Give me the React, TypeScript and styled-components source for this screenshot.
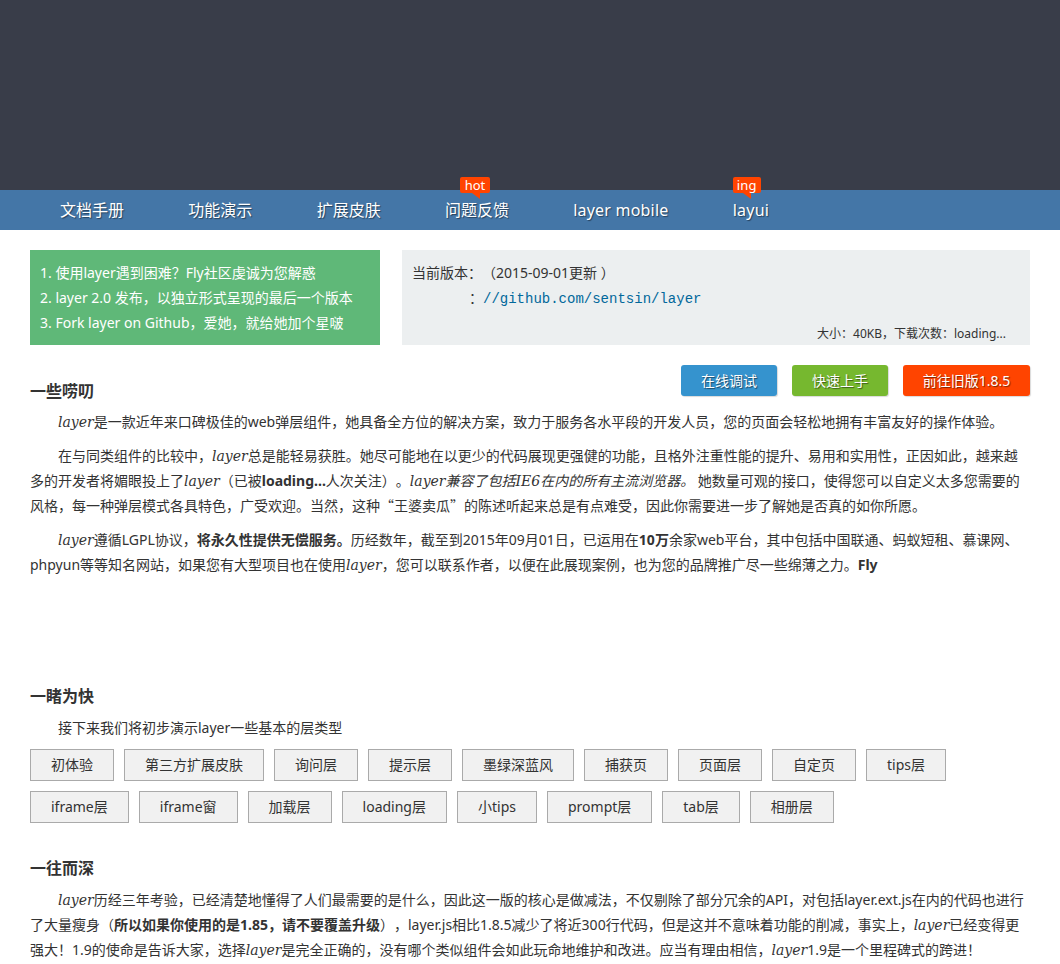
import React from "react";
import styled, { createGlobalStyle } from "styled-components";

const Global = createGlobalStyle`
  html, body { margin: 0; padding: 0; background: #fff; overflow: hidden; }
  body {
    font-family: "Noto Sans", "Noto Sans CJK SC", sans-serif;
    font-size: 14px;
    color: #333;
    text-spacing-trim: space-all;
  }
`;

const Banner = styled.header`
  height: 190px;
  background: #393d49;
`;

const Nav = styled.nav`
  display: flex;
  gap: 64.3px;
  height: 40px;
  padding-left: 60px;
  background: #4476a7;
`;

const NavItem = styled.a<{ $latin?: boolean }>`
  position: relative;
  line-height: 40px;
  font-size: 16px;
  letter-spacing: ${(p) => (p.$latin ? "0.2px" : "0")};
  color: #fff;
  text-shadow: 1px 1px 1px rgba(0, 0, 0, 0.45);
  white-space: nowrap;
`;

const Badge = styled.span<{ $left: number; $width: number }>`
  position: absolute;
  top: -13px;
  left: ${(p) => p.$left}px;
  width: ${(p) => p.$width}px;
  height: 16px;
  border-radius: 2px;
  background: #ff4400;
  font-size: 13px;
  line-height: 16px;
  text-align: center;
  color: #fff;
  text-shadow: none;

  &::after {
    content: "";
    position: absolute;
    top: 16px;
    right: 10px;
    border-style: solid;
    border-width: 6px 0 0 8px;
    border-color: #ff4400 transparent transparent transparent;
  }
`;

const Content = styled.main`
  padding: 20px 30px 0;
`;

const TopRow = styled.div`
  display: flex;
  gap: 22px;
  height: 95px;
`;

const Tips = styled.div`
  flex: none;
  box-sizing: border-box;
  width: 350px;
  padding: 10px;
  background: #5fb878;
  color: #fff;
  line-height: 25px;
`;

const TipLine = styled.div`
  white-space: nowrap;
`;

const Version = styled.div`
  position: relative;
  flex: 1;
  padding: 10px;
  background: #eceff0;
  line-height: 25px;
`;

const RepoLine = styled.div`
  padding-left: 57px;
`;

const Repo = styled.a`
  font-family: "Liberation Mono", monospace;
  font-size: 14px;
  line-height: 1;
  color: #01689b;
`;

const Stats = styled.div`
  position: absolute;
  right: 24px;
  bottom: 0;
  font-size: 12px;
  line-height: 22px;
`;

const IntroHead = styled.div`
  display: flex;
  justify-content: space-between;
  height: 31px;
  margin: 20px 0 13px;
`;

const Title = styled.h2`
  margin: 0;
  font-size: 16px;
  font-weight: 700;
  line-height: 22px;
`;

const IntroTitle = styled(Title)`
  padding-top: 15px;
`;

const Actions = styled.div`
  display: flex;
  gap: 15px;
`;

const Action = styled.a<{ $bg: string; $width: number }>`
  width: ${(p) => p.$width}px;
  height: 31px;
  border-radius: 3px;
  background: ${(p) => p.$bg};
  box-shadow: 1px 1px 1px rgba(0, 0, 0, 0.15);
  line-height: 32px;
  text-align: center;
  color: #fff;
  text-shadow: 1px 1px 1px rgba(0, 0, 0, 0.5);
`;

const Para = styled.p`
  margin: 0 0 9px;
  line-height: 25px;
  text-indent: 2em;
`;

const Em = styled.em`
  font-family: "DejaVu Serif", "Noto Sans CJK SC", serif;
  font-size: 14px;
  line-height: 1;
`;

const Quote = styled.span`
  font-family: "Noto Sans CJK SC", sans-serif;
  line-height: 1;
`;

const Section = styled.section<{ $top: number }>`
  margin-top: ${(p) => p.$top}px;
`;

const SectionTitle = styled(Title)`
  margin-bottom: 8px;
`;

const DemoList = styled.div`
  display: flex;
  flex-wrap: wrap;
  gap: 10px;
`;

const Demo = styled.button`
  height: 32px;
  padding: 0 20px;
  border: 1px solid #aaa;
  border-radius: 0;
  background: #f1f1f1;
  font: inherit;
  line-height: 30px;
  color: #333;
  white-space: nowrap;
`;

const demos = [
  "初体验", "第三方扩展皮肤", "询问层", "提示层", "墨绿深蓝风", "捕获页", "页面层", "自定页", "tips层",
  "iframe层", "iframe窗", "加载层", "loading层", "小tips", "prompt层", "tab层", "相册层",
];

export default function App() {
  return (
    <>
      <Global />
      <Banner />
      <Nav>
        <NavItem>文档手册</NavItem>
        <NavItem>功能演示</NavItem>
        <NavItem>扩展皮肤</NavItem>
        <NavItem>
          问题反馈
          <Badge $left={15} $width={30}>hot</Badge>
        </NavItem>
        <NavItem $latin>layer mobile</NavItem>
        <NavItem $latin>
          layui
          <Badge $left={0} $width={28}>ing</Badge>
        </NavItem>
      </Nav>
      <Content>
        <TopRow>
          <Tips>
            <TipLine>1. 使用layer遇到困难？Fly社区虔诚为您解惑</TipLine>
            <TipLine>2. layer 2.0 发布，以独立形式呈现的最后一个版本</TipLine>
            <TipLine>3. Fork layer on Github，爱她，就给她加个星啵</TipLine>
          </Tips>
          <Version>
            <div>当前版本：（2015-09-01更新 ）</div>
            <RepoLine>：<Repo>//github.com/sentsin/layer</Repo></RepoLine>
            <Stats>大小：40KB，下载次数：loading...</Stats>
          </Version>
        </TopRow>
        <IntroHead>
          <IntroTitle>一些唠叨</IntroTitle>
          <Actions>
            <Action $bg="#3593ce" $width={96}>在线调试</Action>
            <Action $bg="#76b82f" $width={96}>快速上手</Action>
            <Action $bg="#ff4400" $width={127}>前往旧版1.8.5</Action>
          </Actions>
        </IntroHead>
        <Para>
          <Em>layer</Em>是一款近年来口碑极佳的web弹层组件，她具备全方位的解决方案，致力于服务各水平段的开发人员，您的页面会轻松地拥有丰富友好的操作体验。
        </Para>
        <Para>
          在与同类组件的比较中，<Em>layer</Em>总是能轻易获胜。她尽可能地在以更少的代码展现更强健的功能，且格外注重性能的提升、易用和实用性，正因如此，越来越多的开发者将媚眼投上了<Em>layer</Em>（已被<b>loading...</b>人次关注）。<Em>layer兼容了包括IE6在内的所有主流浏览器。</Em> 她数量可观的接口，使得您可以自定义太多您需要的风格，每一种弹层模式各具特色，广受欢迎。当然，这种<Quote>“</Quote>王婆卖瓜<Quote>”</Quote>的陈述听起来总是有点难受，因此你需要进一步了解她是否真的如你所愿。
        </Para>
        <Para>
          <Em>layer</Em>遵循LGPL协议，<b>将永久性提供无偿服务。</b>历经数年，截至到2015年09月01日，已运用在<b>10万</b>余家web平台，其中包括中国联通、蚂蚁短租、慕课网、phpyun等等知名网站，如果您有大型项目也在使用<Em>layer</Em>，您可以联系作者，以便在此展现案例，也为您的品牌推广尽一些绵薄之力。<b>Fly</b>
        </Para>
        <Section $top={108}>
          <SectionTitle>一睹为快</SectionTitle>
          <Para>接下来我们将初步演示layer一些基本的层类型</Para>
          <DemoList>
            {demos.map((d) => (
              <Demo key={d}>{d}</Demo>
            ))}
          </DemoList>
        </Section>
        <Section $top={34}>
          <SectionTitle>一往而深</SectionTitle>
          <Para>
            <Em>layer</Em>历经三年考验，已经清楚地懂得了人们最需要的是什么，因此这一版的核心是做减法，不仅剔除了部分冗余的API，对包括layer.ext.js在内的代码也进行了大量瘦身（<b>所以如果你使用的是1.85，请不要覆盖升级</b>），layer.js相比1.8.5减少了将近300行代码，但是这并不意味着功能的削减，事实上，<Em>layer</Em>已经变得更强大！1.9的使命是告诉大家，选择<Em>layer</Em>是完全正确的，没有哪个类似组件会如此玩命地维护和改进。应当有理由相信，<Em>layer</Em>1.9是一个里程碑式的跨进！
          </Para>
        </Section>
      </Content>
    </>
  );
}
